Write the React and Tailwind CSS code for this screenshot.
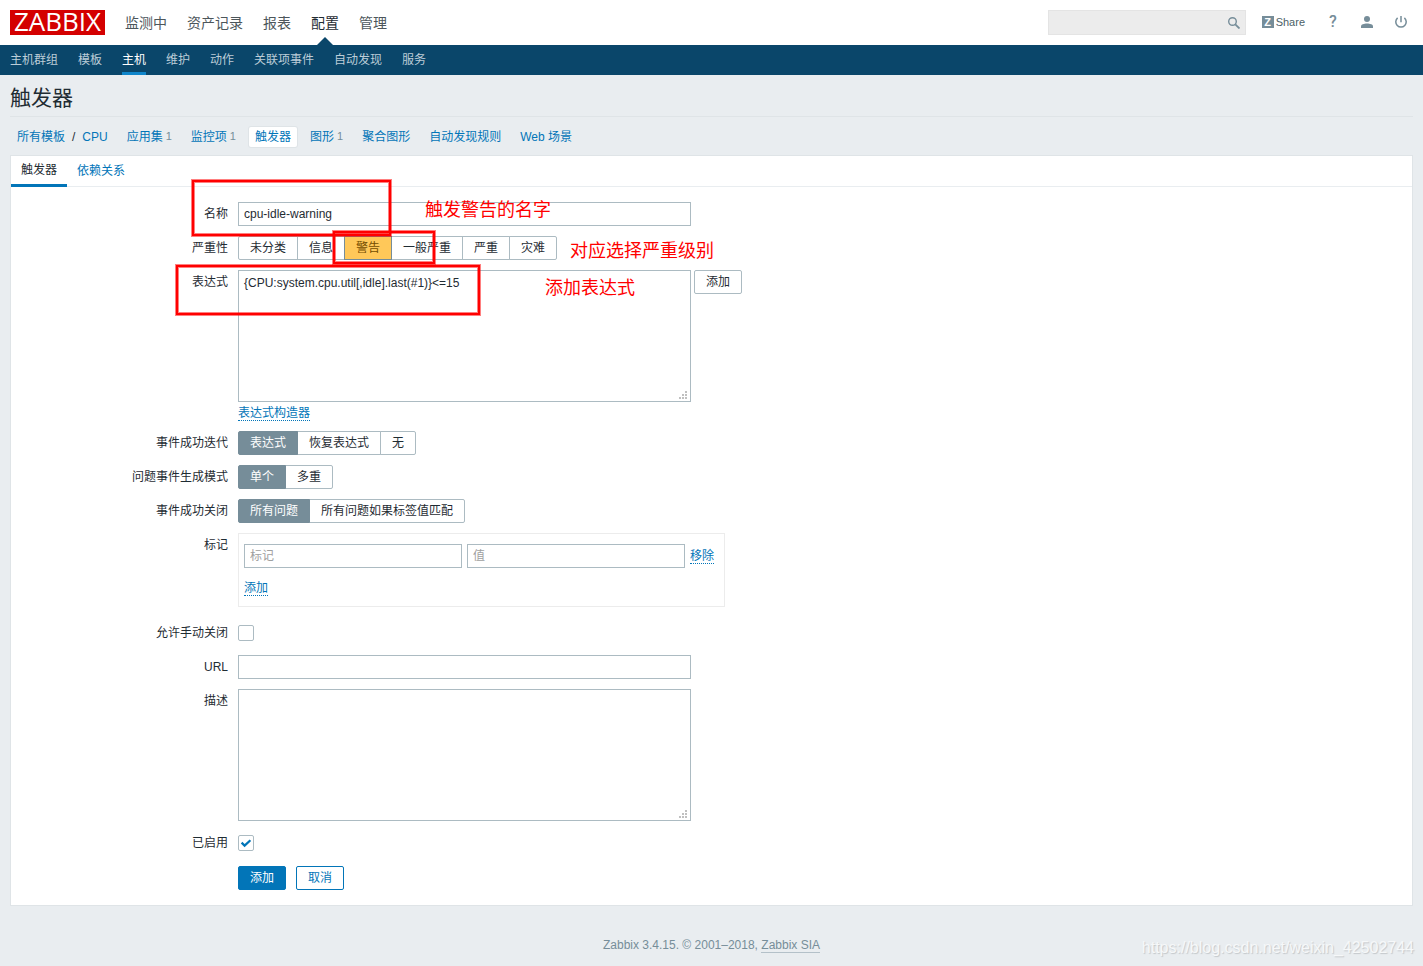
import React, { useState } from "react";

const topMenu = ["监测中", "资产记录", "报表", "配置", "管理"];
const subMenu = ["主机群组", "模板", "主机", "维护", "动作", "关联项事件", "自动发现", "服务"];

const objectLinks = [
  { label: "应用集", count: 1 },
  { label: "监控项", count: 1 },
  { label: "触发器", active: true },
  { label: "图形", count: 1 },
  { label: "聚合图形" },
  { label: "自动发现规则" },
  { label: "Web 场景" },
];

const inputClass = "h-6 border border-[#acbbc2] bg-white px-[5px] text-xs text-[#1f2c33] outline-none placeholder:text-[#a0a0a0]";
const dottedLink = "border-b border-dotted border-[#0275b8] text-[#0275b8] leading-[14px]";

const SearchIcon = () => (
  <svg width="12" height="12" viewBox="0 0 12 12" fill="none" stroke="#768d99" aria-hidden="true">
    <circle cx="4.5" cy="4.5" r="3.8" strokeWidth="1.4" />
    <path d="M7.3 7.3l4.2 4.2" strokeWidth="1.8" />
  </svg>
);

const UserIcon = () => (
  <svg width="12" height="12" viewBox="0 0 12 12" fill="#768d99" aria-hidden="true">
    <circle cx="6" cy="3" r="3" />
    <path d="M0 12v-1.6C0 8.6 3 7.6 6 7.6s6 1 6 2.8V12z" />
  </svg>
);

const PowerIcon = () => (
  <svg width="12" height="12" viewBox="0 0 12 12" fill="none" stroke="#768d99" strokeWidth="1.5" aria-hidden="true">
    <path d="M6 0v6.2" />
    <path d="M2.6 1.9a5.2 5.2 0 1 0 6.8 0" />
  </svg>
);

const Header = () => (
  <header className="flex h-[45px] items-center bg-white pl-[10px] pr-4">
    <a href="#" className="flex h-[25px] w-[95px] items-center justify-center bg-[#d40000] pb-[3px] font-['Open_Sans',sans-serif] text-[26px] font-medium leading-none text-white">
      ZABBIX
    </a>
    <nav className="ml-5 flex h-full gap-5 text-sm">
      {topMenu.map((item) => (
        <a
          key={item}
          href="#"
          className={`relative flex items-center ${item === "配置" ? "text-[#1f2c33]" : "text-[#4c565b]"}`}
        >
          {item}
          {item === "配置" && (
            <svg className="absolute bottom-0 left-1/2 -translate-x-1/2" width="16" height="8" viewBox="0 0 16 8" aria-hidden="true">
              <path d="M0 8l8-8 8 8z" fill="#0a466a" />
            </svg>
          )}
        </a>
      ))}
    </nav>
    <div className="ml-auto flex items-center gap-4">
      <form className="flex h-[25px] w-[198px] items-center border border-[#e4e4e4] bg-[#ececec] pr-[5px]">
        <input type="search" aria-label="搜索" className="h-full min-w-0 flex-1 bg-transparent px-1 text-xs outline-none" />
        <button type="button" aria-label="搜索">
          <SearchIcon />
        </button>
      </form>
      <div className="flex items-center gap-[22px] pb-px">
        <a href="#" className="flex items-center gap-[2px] text-[11px] leading-3 text-[#4c5f68]">
          <span className="flex size-3 items-center justify-center bg-[#768d99] text-[11px] font-bold text-white">Z</span>
          Share
        </a>
        <a href="#" className="w-3 text-center font-['Roboto',sans-serif] text-base font-medium leading-4 text-[#768d99]">?</a>
        <a href="#" aria-label="用户">
          <UserIcon />
        </a>
        <a href="#" aria-label="退出">
          <PowerIcon />
        </a>
      </div>
    </div>
  </header>
);

const SubNav = () => (
  <nav className="flex h-[30px] gap-5 bg-[#0a466a] px-[10px] text-xs">
    {subMenu.map((item) => (
      <a
        key={item}
        href="#"
        className={`flex items-center border-b-[3px] pt-[3px] ${
          item === "主机" ? "border-[#0f85ca] text-white" : "border-transparent text-[#bccdd8]"
        }`}
      >
        {item}
      </a>
    ))}
  </nav>
);

const ObjectNav = () => (
  <nav className="flex h-[38px] items-center gap-[7px] pt-px text-xs text-[#0275b8]">
    <span className="flex gap-[7px] pl-[7px] pr-[6px]">
      <a href="#">所有模板</a>
      <span className="text-[#1f2c33]">/</span>
      <a href="#">CPU</a>
    </span>
    {objectLinks.map(({ label, count, active }) => (
      <a
        key={label}
        href="#"
        className={`flex h-5 items-center gap-[3px] rounded-xs px-[6px] ${active ? "bg-white ring-1 ring-[#dfe4e7]" : ""}`}
      >
        {label}
        {count && <sup className="top-0 text-[11px] leading-none text-[#768d99]">{count}</sup>}
      </a>
    ))}
  </nav>
);

const Row = ({ label, htmlFor, children }) => (
  <div className="flex gap-[10px]">
    {htmlFor ? (
      <label htmlFor={htmlFor} className="w-[217px] shrink-0 text-right leading-6">{label}</label>
    ) : (
      <span className="w-[217px] shrink-0 text-right leading-6">{label}</span>
    )}
    <div className="min-w-0">{children}</div>
  </div>
);

const Segmented = ({ name, label, options, initial, activeClass }) => {
  const [value, setValue] = useState(initial);
  return (
    <div role="radiogroup" aria-label={label} className="flex">
      {options.map((opt, i) => (
        <label
          key={opt}
          className={`relative flex h-6 cursor-pointer items-center border px-[11px] ${i > 0 ? "-ml-px" : "rounded-l-xs"} ${
            i === options.length - 1 ? "rounded-r-xs" : ""
          } ${value === opt ? `z-1 ${activeClass}` : "border-[#acbbc2] bg-white"}`}
        >
          <input
            type="radio"
            name={name}
            checked={value === opt}
            onChange={() => setValue(opt)}
            className="sr-only"
          />
          {opt}
        </label>
      ))}
    </div>
  );
};

const TextArea = ({ id, defaultValue }) => (
  <div className="relative">
    <textarea
      id={id}
      defaultValue={defaultValue}
      className="block h-[132px] w-[453px] resize-none border border-[#acbbc2] bg-white px-[5px] py-1 text-xs leading-4 outline-none"
    />
    <svg className="absolute bottom-[3px] right-[4px]" width="8" height="8" viewBox="0 0 8 8" fill="#c0c0c0" aria-hidden="true">
      <path d="M6 0h2v2H6zM3 3h2v2H3zM6 3h2v2H6zM0 6h2v2H0zM3 6h2v2H3zM6 6h2v2H6z" />
    </svg>
  </div>
);

const CheckBox = ({ id, defaultChecked }) => (
  <span className="relative mt-1 block size-4">
    <input
      id={id}
      type="checkbox"
      defaultChecked={defaultChecked}
      className="peer block size-4 appearance-none rounded-xs border border-[#acbbc2] bg-white"
    />
    <svg
      className="pointer-events-none absolute inset-0 hidden peer-checked:block"
      width="16" height="16" viewBox="0 0 16 16" fill="none" stroke="#0275b8" strokeWidth="2.2" aria-hidden="true"
    >
      <path d="M3.6 7.6l3 3 5.8-5.4" />
    </svg>
  </span>
);

const selected = "border-[#768d99] bg-[#768d99] text-white";
const warning = "border-[#768d99] bg-[#ffc859] text-[#734d00]";

const TriggerForm = () => (
  <form className="flex flex-col gap-[10px] pb-[15px] pt-[15px]">
    <Row label="名称" htmlFor="name">
      <input id="name" type="text" defaultValue="cpu-idle-warning" className={`${inputClass} block w-[453px]`} />
    </Row>
    <Row label="严重性">
      <Segmented
        name="severity"
        label="严重性"
        options={["未分类", "信息", "警告", "一般严重", "严重", "灾难"]}
        initial="警告"
        activeClass={warning}
      />
    </Row>
    <Row label="表达式" htmlFor="expression">
      <div className="flex items-start gap-[3px]">
        <TextArea id="expression" defaultValue="{CPU:system.cpu.util[,idle].last(#1)}<=15" />
        <button type="button" className="h-6 rounded-xs border border-[#acbbc2] px-[11px]">添加</button>
      </div>
      <div className="flex pt-1">
        <a href="#" className={dottedLink}>表达式构造器</a>
      </div>
    </Row>
    <Row label="事件成功迭代">
      <Segmented name="recovery" label="事件成功迭代" options={["表达式", "恢复表达式", "无"]} initial="表达式" activeClass={selected} />
    </Row>
    <Row label="问题事件生成模式">
      <Segmented name="mode" label="问题事件生成模式" options={["单个", "多重"]} initial="单个" activeClass={selected} />
    </Row>
    <Row label="事件成功关闭">
      <Segmented name="correlation" label="事件成功关闭" options={["所有问题", "所有问题如果标签值匹配"]} initial="所有问题" activeClass={selected} />
    </Row>
    <Row label="标记">
      <div className="mb-1 w-[487px] border border-[#ececec] px-[5px] py-[10px]">
        <div className="flex items-center gap-[5px]">
          <input type="text" aria-label="标记" placeholder="标记" className={`${inputClass} w-[218px]`} />
          <input type="text" aria-label="值" placeholder="值" className={`${inputClass} w-[218px]`} />
          <button type="button" className={dottedLink}>移除</button>
        </div>
        <button type="button" className={`${dottedLink} mt-[13px]`}>添加</button>
      </div>
    </Row>
    <Row label="允许手动关闭" htmlFor="manual-close">
      <CheckBox id="manual-close" />
    </Row>
    <Row label="URL" htmlFor="url">
      <input id="url" type="text" className={`${inputClass} block w-[453px]`} />
    </Row>
    <Row label="描述" htmlFor="description">
      <TextArea id="description" />
    </Row>
    <Row label="已启用" htmlFor="enabled">
      <CheckBox id="enabled" defaultChecked />
    </Row>
    <Row>
      <div className="flex gap-[10px] pt-px">
        <button type="button" className="h-6 rounded-xs border border-[#0275b8] bg-[#0275b8] px-[11px] text-white">添加</button>
        <button type="button" className="h-6 rounded-xs border border-[#0275b8] px-[11px] text-[#0275b8]">取消</button>
      </div>
    </Row>
  </form>
);

// Red marker boxes and notes laid over the form
const frame = "absolute border-2 border-[#ff0000] ring-1 ring-[#ff0000]/50 inset-ring inset-ring-[#ff0000]/50";
const note = "absolute whitespace-nowrap text-lg leading-6 text-[#ff0000]";

const Annotations = () => (
  <div className="pointer-events-none absolute inset-0 z-10">
    <div className={`${frame} left-[181px] top-[24px] h-[56px] w-[199px]`} />
    <div className={`${frame} left-[322px] top-[75px] h-[33px] w-[102px]`} />
    <div className={`${frame} left-[165px] top-[109px] h-[50px] w-[304px]`} />
    <span className={`${note} left-[414px] top-[42px]`}>触发警告的名字</span>
    <span className={`${note} left-[559px] top-[83px]`}>对应选择严重级别</span>
    <span className={`${note} left-[534px] top-[120px]`}>添加表达式</span>
  </div>
);

export default function App() {
  return (
    <div className="flex min-h-screen flex-col bg-[#e9edf0] font-['Liberation_Sans','Noto_Sans_CJK_SC',sans-serif] text-xs text-[#1f2c33]">
      <Header />
      <SubNav />
      <main className="px-[10px]">
        <h1 className="flex h-[42px] items-center border-b border-[#dfe4e7] pt-1 text-[21px] leading-none">触发器</h1>
        <ObjectNav />
        <section className="relative border border-[#dfe4e7] bg-white">
          <div className="flex h-[31px] border-b border-[#e9edf0]">
            <a href="#" className="-mb-px flex items-center border-b-[3px] border-[#0275b8] px-[10px]">触发器</a>
            <a href="#" className="flex items-center px-[10px] text-[#0275b8]">依赖关系</a>
          </div>
          <TriggerForm />
          <Annotations />
        </section>
      </main>
      <footer className="relative flex flex-1 items-center justify-center pt-[18px] text-[#768d99]">
        <p className="leading-[14px]">
          Zabbix 3.4.15. © 2001–2018,{" "}
          <a href="#" className="border-b border-[#b4c1c9]">Zabbix SIA</a>
        </p>
        <span className="absolute bottom-[6px] right-[9px] text-base leading-6 text-[#f6f8f9] [text-shadow:1px_1px_1px_#c3c7ca]">
          https://blog.csdn.net/weixin_42502744
        </span>
      </footer>
    </div>
  );
}
